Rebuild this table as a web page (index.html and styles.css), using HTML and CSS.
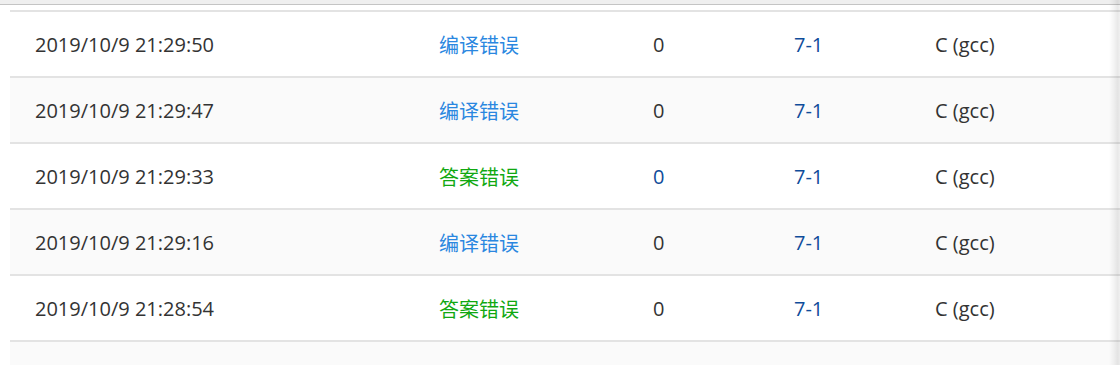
FILE: index.html
```html
<!DOCTYPE html>
<html lang="zh-CN">
<head>
<meta charset="utf-8">
<link rel="stylesheet" href="styles.css">
</head>
<body>
<div class="topbar"></div>
<div class="page">
  <div class="table">
    <div class="row">
      <span class="c-date">2019/10/9 21:29:50</span>
      <span class="c-status ce">编译错误</span>
      <span class="c-score">0</span>
      <span class="c-prob">7-1</span>
      <span class="c-lang">C (gcc)</span>
    </div>
    <div class="row alt">
      <span class="c-date">2019/10/9 21:29:47</span>
      <span class="c-status ce">编译错误</span>
      <span class="c-score">0</span>
      <span class="c-prob">7-1</span>
      <span class="c-lang">C (gcc)</span>
    </div>
    <div class="row">
      <span class="c-date">2019/10/9 21:29:33</span>
      <span class="c-status wa">答案错误</span>
      <span class="c-score link">0</span>
      <span class="c-prob">7-1</span>
      <span class="c-lang">C (gcc)</span>
    </div>
    <div class="row alt">
      <span class="c-date">2019/10/9 21:29:16</span>
      <span class="c-status ce">编译错误</span>
      <span class="c-score">0</span>
      <span class="c-prob">7-1</span>
      <span class="c-lang">C (gcc)</span>
    </div>
    <div class="row">
      <span class="c-date">2019/10/9 21:28:54</span>
      <span class="c-status wa">答案错误</span>
      <span class="c-score">0</span>
      <span class="c-prob">7-1</span>
      <span class="c-lang">C (gcc)</span>
    </div>
    <div class="row alt empty"></div>
  </div>
  <div class="edge"></div>
</div>
</body>
</html>
```

FILE: styles.css
```css
html, body {
  margin: 0;
  padding: 0;
  background: #fff;
  overflow: hidden;
}
body {
  font-family: "Open Sans", "Noto Sans CJK SC", sans-serif;
  font-size: 20px;
  color: #333;
  height: 365px;
  position: relative;
}
.topbar {
  height: 4px;
  background: #efefef;
  border-bottom: 1px solid #c4c4c4;
}
.page {
  padding: 5px 0 0 10px;
}
.table {
  display: flex;
  flex-direction: column;
}
.row {
  display: grid;
  grid-template-columns: 404px 214px 141px 141px 1fr;
  align-items: center;
  height: 64px;
  padding-left: 25px;
  border-top: 2px solid #e3e3e3;
  background: #fff;
}
.row.alt {
  background: #fafafa;
}
.row.empty {
  height: 30px;
}
.ce { color: #2a87e0; }
.wa { color: #11a811; }
.c-score.link { color: #0f4c9a; }
.c-prob { color: #0f4c9a; }
.edge {
  position: absolute;
  top: 0;
  right: 0;
  width: 11px;
  height: 100%;
  background: linear-gradient(to right, rgba(0,0,0,0) 0%, rgba(0,0,0,0.04) 40%, rgba(0,0,0,0.09) 80%, rgba(0,0,0,0.06) 100%);
}
```
